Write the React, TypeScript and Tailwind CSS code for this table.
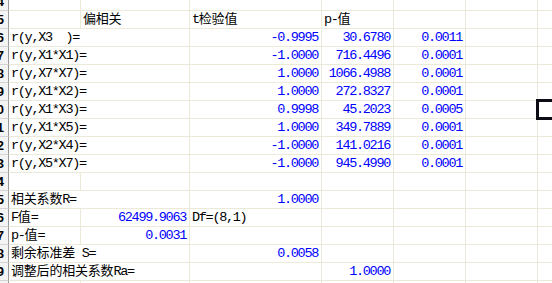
import React from "react";

type Cell = {
  text?: string;
  blue?: boolean;
  right?: boolean;
  overflow?: boolean; // text spills into the next cell, gridline hidden
};

type Row = { num: number; cells: Cell[] };

const widths = ["w-[72px]", "w-[109px]", "w-[132px]", "w-[72px]", "w-[72px]", "w-[72px]", "w-[72px]"];

const num = (text: string): Cell => ({ text, blue: true, right: true });
const label = (text: string, overflow = true): Cell => ({ text, overflow });

const rows: Row[] = [
  { num: 5, cells: [{}, { text: "偏相关" }, { text: "t检验值" }, { text: "p-值" }] },
  { num: 6, cells: [label("r(y,X3  )="), {}, num("-0.9995"), num("30.6780"), num("0.0011")] },
  { num: 7, cells: [label("r(y,X1*X1)="), {}, num("-1.0000"), num("716.4496"), num("0.0001")] },
  { num: 8, cells: [label("r(y,X7*X7)="), {}, num("1.0000"), num("1066.4988"), num("0.0001")] },
  { num: 9, cells: [label("r(y,X1*X2)="), {}, num("1.0000"), num("272.8327"), num("0.0001")] },
  { num: 10, cells: [label("r(y,X1*X3)="), {}, num("0.9998"), num("45.2023"), num("0.0005")] },
  { num: 11, cells: [label("r(y,X1*X5)="), {}, num("1.0000"), num("349.7889"), num("0.0001")] },
  { num: 12, cells: [label("r(y,X2*X4)="), {}, num("-1.0000"), num("141.0216"), num("0.0001")] },
  { num: 13, cells: [label("r(y,X5*X7)="), {}, num("-1.0000"), num("945.4990"), num("0.0001")] },
  { num: 14, cells: [] },
  { num: 15, cells: [label("相关系数R="), {}, num("1.0000")] },
  { num: 16, cells: [label("F值=", false), num("62499.9063"), { text: "Df=(8,1)" }] },
  { num: 17, cells: [label("p-值=", false), num("0.0031")] },
  { num: 18, cells: [label("剩余标准差 S="), {}, num("0.0058")] },
  { num: 19, cells: [label("调整后的相关系数Ra="), {}, {}, num("1.0000")] },
  { num: 20, cells: [] },
];

// CJK runs keep their full width, Latin runs are squeezed to the narrow cell font
function Text({ value }: { value: string }) {
  const parts = value.match(/[\u4e00-\u9fff]+|[^\u4e00-\u9fff]+/g) ?? [];
  return (
    <>
      {parts.map((p, i) =>
        /[\u4e00-\u9fff]/.test(p) ? (
          <span key={i} className="text-[13px] tracking-[-0.2px]">
            {p}
          </span>
        ) : (
          <span key={i} className="text-[13.5px] tracking-[-1.3px] whitespace-pre">
            {p}
          </span>
        )
      )}
    </>
  );
}

function SheetRow({ row, first }: { row: Row; first?: boolean }) {
  const h = first ? "h-[11px]" : "h-[18px]";
  return (
    <div className={`flex ${h} shrink-0`}>
      <div className="w-[9px] shrink-0 overflow-hidden border-r border-b border-r-[#9a9a9a] border-b-[#d4d4d4] bg-[#f4f4f4] flex items-end justify-end">
        <span className="pr-[4px] font-['Liberation_Sans',sans-serif] text-[13px] font-bold leading-[17px] text-black">
          {row.num}
        </span>
      </div>
      {widths.map((w, i) => {
        const c = row.cells[i] ?? {};
        return (
          <div
            key={i}
            className={`${w} shrink-0 border-b border-[#ece9d8] ${
              c.overflow ? "border-r-0 relative z-10" : "border-r"
            } flex items-end ${c.right ? "justify-end pr-[3px]" : "pl-[2px]"} ${
              c.overflow ? "overflow-visible" : "overflow-hidden"
            }`}
          >
            {c.text && (
              <span
                className={`whitespace-nowrap leading-[17px] ${
                  c.blue ? "text-[#0000ff]" : "text-black"
                }`}
              >
                <Text value={c.text} />
              </span>
            )}
          </div>
        );
      })}
    </div>
  );
}

export default function App() {
  return (
    <div className="relative w-[552px] h-[283px] overflow-hidden bg-white font-['Liberation_Mono','Noto_Sans_CJK_SC',monospace]">
      <div className="flex flex-col">
        <SheetRow row={{ num: 4, cells: [] }} first />
        {rows.map((r) => (
          <SheetRow key={r.num} row={r} />
        ))}
      </div>
      {/* active cell */}
      <div className="absolute left-[536px] top-[99px] w-[40px] h-[21px] border-[3px] border-[#0c0c14]" />
    </div>
  );
}
